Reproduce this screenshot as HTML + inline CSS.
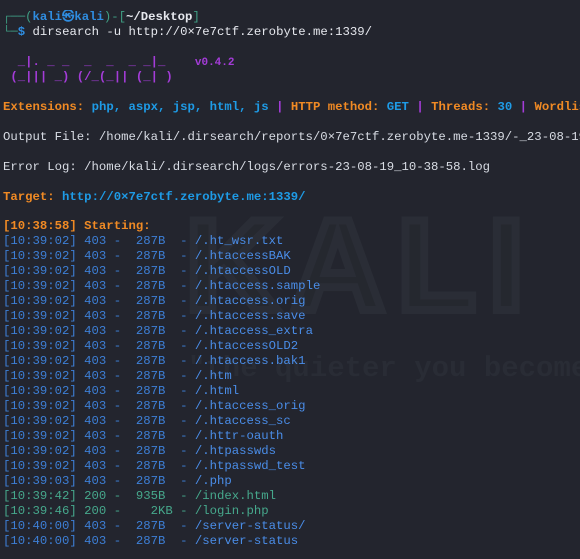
<!DOCTYPE html>
<html><head><meta charset="utf-8"><style>
html,body{margin:0;padding:0;overflow:hidden}
body{width:580px;height:559px;background:#23252e;overflow:hidden;position:relative;font-family:"Liberation Mono","DejaVu Sans Mono",monospace;font-size:12.3px;color:#d8dce4}
.l{position:absolute;left:3px;right:0;overflow:hidden;white-space:pre;line-height:15px;height:15px}
.b{font-weight:bold}
.o{color:#f08a24;font-weight:bold}
.c{color:#1e9be6;font-weight:bold}
.p{color:#a43cd8;font-weight:bold}
.bl{color:#3d7fd6}
.bp{color:#4a8de8}
.g{color:#46a88c}
.gr{color:#3f9f84}
.w{color:#e6e8ee}
.wm{position:absolute;font-weight:bold;white-space:pre;overflow:hidden}
</style></head><body>
<div class="wm" style="left:185px;top:190px;width:395px;font-size:130px;font-family:'Liberation Sans',sans-serif;letter-spacing:12px;color:#25282f;-webkit-text-stroke:8px #2a2d36">KALI L</div>
<div class="wm" style="left:188px;top:352px;width:392px;font-size:29px;color:#292c35">"the quieter you become, th</div>

<div class="l gr" style="top:10px">┌──(<span class="c" style="color:#2f8de0">kali㉿kali</span>)-[<span class="w b">~/Desktop</span>]</div>
<div class="l gr" style="top:25px">└─<span class="c" style="color:#2f8de0">$</span> <span class="w">dirsearch -u http://0×7e7ctf.zerobyte.me:1339/</span></div>
<div class="l p" style="top:55px">  _|. _ _  _  _  _ _|_    <span style="font-size:11px">v0.4.2</span></div>
<div class="l p" style="top:70px"> (_||| _) (/_(_|| (_| )</div>
<div class="l" style="top:100px"><span class="o">Extensions: </span><span class="c">php, aspx, jsp, html, js</span> <span class="p">|</span> <span class="o">HTTP method: </span><span class="c">GET</span> <span class="p">|</span> <span class="o">Threads: </span><span class="c">30</span> <span class="p">|</span> <span class="o">Wordlist</span></div>
<div class="l" style="top:130px">Output File: /home/kali/.dirsearch/reports/0×7e7ctf.zerobyte.me-1339/-_23-08-19_10-38-58.txt</div>
<div class="l" style="top:160px">Error Log: /home/kali/.dirsearch/logs/errors-23-08-19_10-38-58.log</div>
<div class="l" style="top:190px"><span class="o">Target: </span><span class="c">http://0×7e7ctf.zerobyte.me:1339/</span></div>
<div class="l o" style="top:219px">[10:38:58] Starting:</div>
<div class="l bl" style="top:234px">[10:39:02] 403 -  287B  - <span class="bp">/.ht_wsr.txt</span></div>
<div class="l bl" style="top:249px">[10:39:02] 403 -  287B  - <span class="bp">/.htaccessBAK</span></div>
<div class="l bl" style="top:264px">[10:39:02] 403 -  287B  - <span class="bp">/.htaccessOLD</span></div>
<div class="l bl" style="top:279px">[10:39:02] 403 -  287B  - <span class="bp">/.htaccess.sample</span></div>
<div class="l bl" style="top:294px">[10:39:02] 403 -  287B  - <span class="bp">/.htaccess.orig</span></div>
<div class="l bl" style="top:309px">[10:39:02] 403 -  287B  - <span class="bp">/.htaccess.save</span></div>
<div class="l bl" style="top:324px">[10:39:02] 403 -  287B  - <span class="bp">/.htaccess_extra</span></div>
<div class="l bl" style="top:339px">[10:39:02] 403 -  287B  - <span class="bp">/.htaccessOLD2</span></div>
<div class="l bl" style="top:354px">[10:39:02] 403 -  287B  - <span class="bp">/.htaccess.bak1</span></div>
<div class="l bl" style="top:369px">[10:39:02] 403 -  287B  - <span class="bp">/.htm</span></div>
<div class="l bl" style="top:384px">[10:39:02] 403 -  287B  - <span class="bp">/.html</span></div>
<div class="l bl" style="top:399px">[10:39:02] 403 -  287B  - <span class="bp">/.htaccess_orig</span></div>
<div class="l bl" style="top:414px">[10:39:02] 403 -  287B  - <span class="bp">/.htaccess_sc</span></div>
<div class="l bl" style="top:429px">[10:39:02] 403 -  287B  - <span class="bp">/.httr-oauth</span></div>
<div class="l bl" style="top:444px">[10:39:02] 403 -  287B  - <span class="bp">/.htpasswds</span></div>
<div class="l bl" style="top:459px">[10:39:02] 403 -  287B  - <span class="bp">/.htpasswd_test</span></div>
<div class="l bl" style="top:474px">[10:39:03] 403 -  287B  - <span class="bp">/.php</span></div>
<div class="l g" style="top:489px">[10:39:42] 200 -  935B  - /index.html</div>
<div class="l g" style="top:504px">[10:39:46] 200 -    2KB - /login.php</div>
<div class="l bl" style="top:519px">[10:40:00] 403 -  287B  - <span class="bp">/server-status/</span></div>
<div class="l bl" style="top:534px">[10:40:00] 403 -  287B  - <span class="bp">/server-status</span></div>
</body></html>
